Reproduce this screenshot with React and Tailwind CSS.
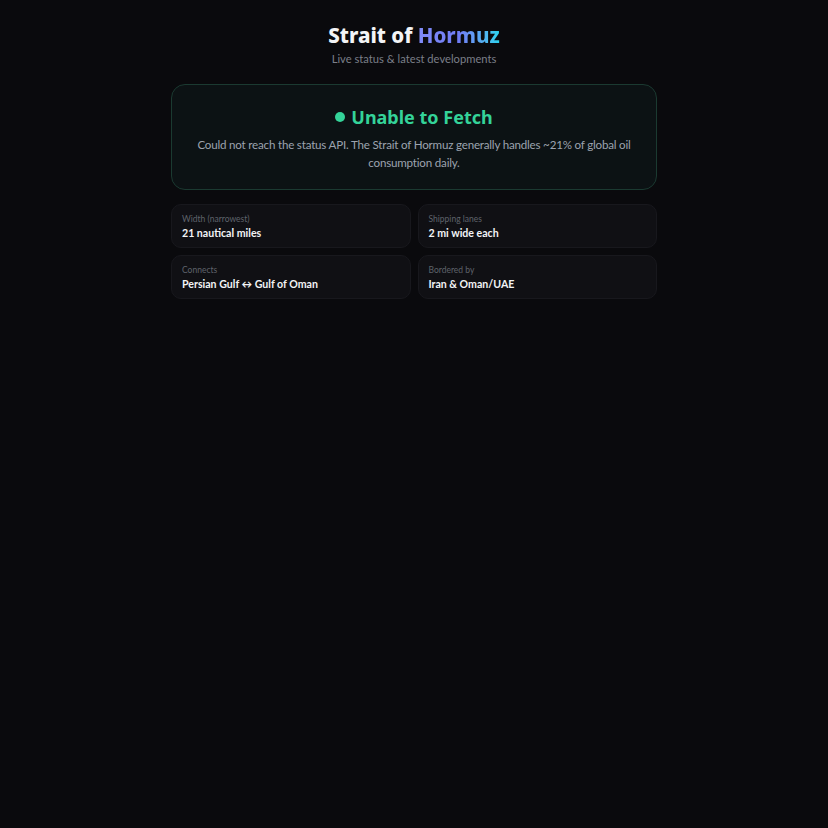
const facts = [
  { label: 'Width (narrowest)', value: '21 nautical miles' },
  { label: 'Shipping lanes', value: '2 mi wide each' },
  { label: 'Connects', value: 'Persian Gulf ↔ Gulf of Oman' },
  { label: 'Bordered by', value: 'Iran & Oman/UAE' },
];

export default function App() {
  return (
    <div className="min-h-screen bg-[#0a0a0d] font-['Lato',sans-serif] text-white">
      <div className="mx-auto w-[486px] pt-[21px]">
        <header className="text-center">
          <h1 className="font-['Noto_Sans',sans-serif] text-[20.5px] font-extrabold leading-[28px] text-[#f3f4f6]">
            Strait of{' '}
            <span className="bg-gradient-to-r from-[#818cf8] via-[#6f7cf5] to-[#22d3ee] bg-clip-text text-transparent">
              Hormuz
            </span>
          </h1>
          <p className="mt-[2px] text-[11.2px] text-[#7b7f88]">Live status &amp; latest developments</p>
        </header>

        <section className="mt-[16px] rounded-[14px] border border-[#1b3a31] bg-[#0c1214] px-4 pt-[20px] pb-[17px] text-center">
          <h2 className="flex items-center justify-center gap-[6px] font-['Noto_Sans',sans-serif] text-[18px] font-bold leading-[24px] text-[#34d399]">
            <span className="h-[10px] w-[10px] rounded-full bg-[#34d399]" />
            Unable to Fetch
          </h2>
          <p className="mx-auto mt-[7px] text-[11.6px] leading-[18px] tracking-[-0.2px] text-[#9ca3af]">
            Could not reach the status API. The Strait of Hormuz generally handles ~21% of global oil consumption daily.
          </p>
        </section>

        <div className="mt-[14px] grid grid-cols-2 gap-[7px]">
          {facts.map(f => (
            <div
              key={f.label}
              className="rounded-[10px] border border-[#18181d] bg-[#101014] px-[10px] pt-[8px] pb-[6px]"
            >
              <div className="text-[8.5px] leading-[12px] text-[#5f636b]">{f.label}</div>
              <div className="mt-[1px] text-[10.6px] font-bold leading-[15px] text-[#f3f4f6]">{f.value}</div>
            </div>
          ))}
        </div>
      </div>
    </div>
  );
}
